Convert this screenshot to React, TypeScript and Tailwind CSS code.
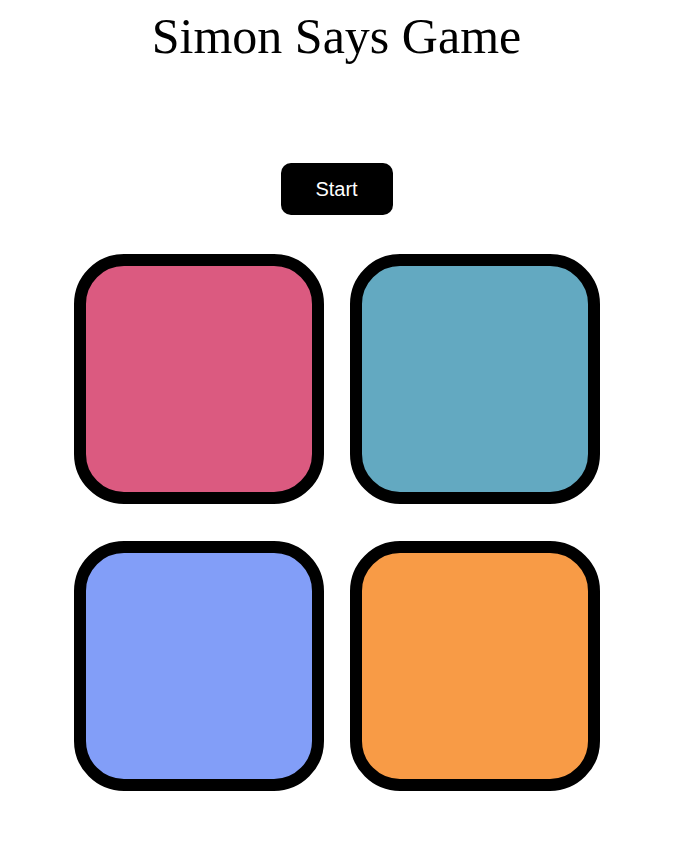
import React from 'react';

const pads = [
  { id: 'red', color: 'bg-[#db5a80]' },
  { id: 'teal', color: 'bg-[#63a9c1]' },
  { id: 'blue', color: 'bg-[#829ef8]' },
  { id: 'orange', color: 'bg-[#f89b46]' },
];

export default function App() {
  return (
    <div className="min-h-screen bg-white flex flex-col items-center pr-[4px]">
      <h1 className="mt-[8px] text-[50px] leading-[56px] font-normal text-black font-['Liberation_Serif','Times_New_Roman',serif]">
        Simon Says Game
      </h1>
      <button className="mt-[99px] w-[112px] h-[52px] rounded-[10px] bg-black text-white text-[20px] leading-none font-['Liberation_Sans',Arial,sans-serif]">
        Start
      </button>
      <div className="mt-[39px] grid grid-cols-[250px_250px] gap-x-[26px] gap-y-[37px]">
        {pads.map((p) => (
          <div key={p.id} className={`w-[250px] h-[250px] rounded-[50px] border-[12px] border-black ${p.color}`} />
        ))}
      </div>
    </div>
  );
}
